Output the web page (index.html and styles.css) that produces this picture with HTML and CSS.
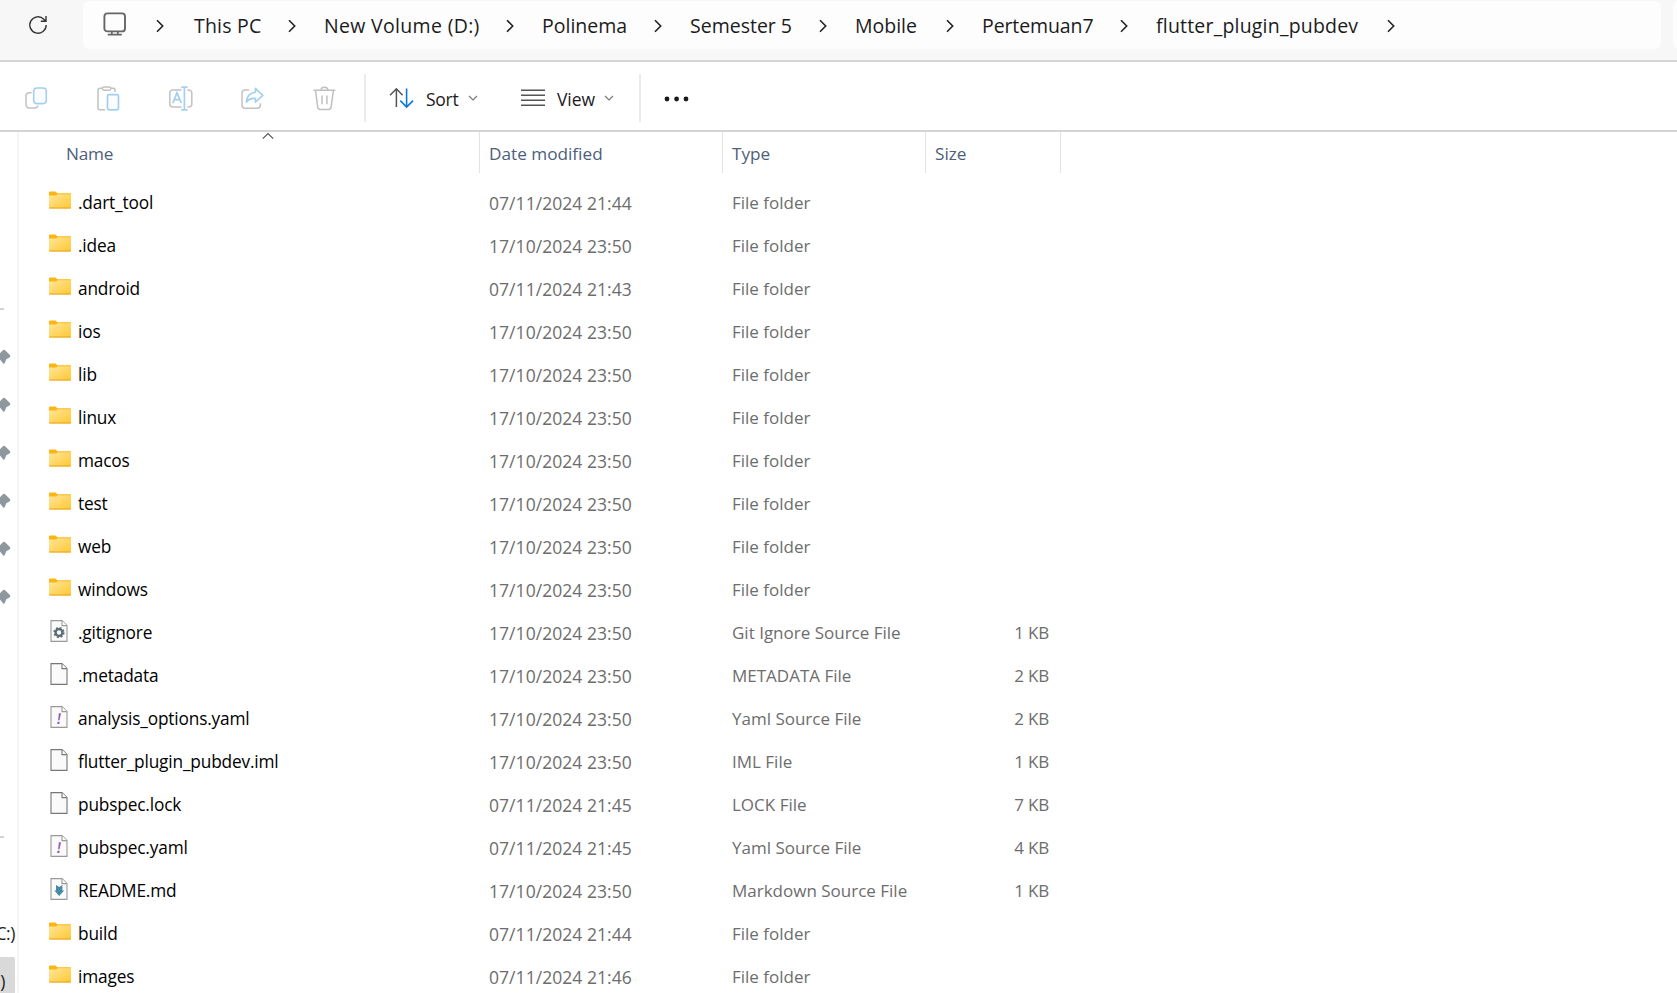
FILE: index.html
```html
<!DOCTYPE html>
<html lang="en">
<head>
<meta charset="utf-8">
<title>flutter_plugin_pubdev</title>
<link rel="stylesheet" href="styles.css">
</head>
<body>
<svg class="defs" width="0" height="0">
  <defs>
    <linearGradient id="fold" x1="0" y1="0" x2="1" y2="1"><stop offset="0" stop-color="#ffe69a"/><stop offset="1" stop-color="#ffc832"/></linearGradient>
    <symbol id="folder" viewBox="0 0 22 18"><path d="M0 1.5Q0 .5 1 .5H6.6L8.3 2.2H21.5Q22 2.2 22 3V6H0Z" fill="#fbb616"/><path d="M0 4.4H7.4L8.6 3.2H22V17.4H0Z" fill="url(#fold)"/><path d="M.3 17H21.7" stroke="#e9a21b" stroke-width="1"/></symbol>
    <symbol id="page" viewBox="0 0 18 22"><path d="M1 .6H12L17 5.6V21.4H1Z" fill="#fafafa" stroke="#777" stroke-width="1.1"/><path d="M12 .8V5.6H16.8" fill="#fff" stroke="#777" stroke-width="1.1"/></symbol>
    <symbol id="page-light" viewBox="0 0 18 22"><path d="M1 .6H12L17 5.6V21.4H1Z" fill="#fafafa" stroke="#999" stroke-width="1.1"/><path d="M12 .8V5.6H16.8" fill="#fff" stroke="#999" stroke-width="1.1"/></symbol>
    <symbol id="gear" viewBox="0 0 18 22"><use href="#page-light" width="18" height="22"/><circle cx="9" cy="12.5" r="3.4" fill="none" stroke="#596b74" stroke-width="2.3"/><circle cx="9" cy="12.5" r="4.9" fill="none" stroke="#596b74" stroke-width="1.4" stroke-dasharray="2 1.85"/></symbol>
    <symbol id="yaml" viewBox="0 0 18 22"><use href="#page-light" width="18" height="22"/><path d="M8.9 7.2H11L9.5 14.2H8.1ZM7.6 15.8H9.7L9.3 17.9H7.2Z" fill="#8d5fae"/></symbol>
    <symbol id="md" viewBox="0 0 18 22"><use href="#page-light" width="18" height="22"/><path d="M6 7L9.3 9L12.4 7V12.4H14.2L9.2 18L4.3 12.4H6Z" fill="#4689a9"/></symbol>
    <symbol id="pin" viewBox="0 0 12 16"><path d="M0 4.3L2.7 1.6Q4 .2 5.3 1.5L10 6Q11 7.2 9.8 8.2L6.3 10.2L4.6 14.5Q4 15.2 3.2 14.4L0 10.6Z" fill="#8f989f"/></symbol>
    <symbol id="right" viewBox="0 0 8 14"><path d="M1 1.2L6.7 7L1 12.8" fill="none" stroke="#222" stroke-width="1.6"/></symbol>
    <symbol id="down" viewBox="0 0 10 6"><path d="M1 1L5 5L9 1" fill="none" stroke="#777" stroke-width="1.1"/></symbol>
  </defs>
</svg>
<div class="window">
  <header class="address-bar">
    <svg class="refresh" width="20" height="20" viewBox="0 0 20 20"><path d="M18.2 10A8.2 8.2 0 1 1 15.8 4.2L17.6 6M18 1.1V6.2H12.8" fill="none" stroke="#333" stroke-width="1.4"/></svg>
    <nav class="crumbs">
      <svg class="pc" width="24" height="24" viewBox="0 0 24 24"><rect x="1.4" y="1.4" width="20.6" height="18" rx="3" fill="none" stroke="#666" stroke-width="1.9"/><path d="M8.8 19.5V22.5M14.8 19.5V22.5M4.8 22.7H18.8" fill="none" stroke="#666" stroke-width="1.7"/></svg>
      <svg class="sep"><use href="#right"/></svg><span class="c1">This PC</span>
      <svg class="sep"><use href="#right"/></svg><span class="c2">New Volume (D:)</span>
      <svg class="sep"><use href="#right"/></svg><span class="c3">Polinema</span>
      <svg class="sep"><use href="#right"/></svg><span class="c4">Semester 5</span>
      <svg class="sep"><use href="#right"/></svg><span class="c5">Mobile</span>
      <svg class="sep"><use href="#right"/></svg><span class="c6">Pertemuan7</span>
      <svg class="sep"><use href="#right"/></svg><span class="c7">flutter_plugin_pubdev</span>
      <svg class="sep"><use href="#right"/></svg>
    </nav>
    <div class="search"></div>
  </header>

  <div class="toolbar">
    <div class="tools">
      <svg width="26" height="26" viewBox="0 0 26 26"><path d="M7.6 6.7H5.4Q2 6.7 2 10V18.6Q2 22 5.4 22H10.4Q13.4 22 14 19.6" fill="none" stroke="#c2c2c2" stroke-width="1.5"/><rect x="9.7" y="2" width="12.6" height="15.6" rx="3" fill="#fafcfe" stroke="#a3cff1" stroke-width="1.6"/></svg>
      <svg width="26" height="26" viewBox="0 0 26 26"><path d="M7 2.3H4Q2 2.3 2 4.3V21.7Q2 23.7 4 23.7H9M14.5 2.3H17Q19 2.3 19 4.3V6" fill="none" stroke="#c2c2c2" stroke-width="1.5"/><rect x="6.4" y="1" width="8.4" height="3.2" rx="1.6" fill="#fff" stroke="#c2c2c2" stroke-width="1.5"/><rect x="11.5" y="8.6" width="11" height="15.2" rx="1.6" fill="#fafcfe" stroke="#a3cff1" stroke-width="1.7"/></svg>
      <svg width="26" height="26" viewBox="0 0 26 26"><path d="M13.6 3.9H5Q1.8 3.9 1.8 7V18Q1.8 21 5 21H13.6M19.4 3.9H20.4Q23.8 3.9 23.8 7V18Q23.8 21 20.4 21H19.4" fill="none" stroke="#c2c2c2" stroke-width="1.5"/><path d="M4.8 17L9 6.8L13.3 17M6.2 13.7H11.8M13.2 1.2H19.5M16.4 1.2V23.8M13.2 23.8H19.5" fill="none" stroke="#a3cff1" stroke-width="1.7"/></svg>
      <svg width="26" height="26" viewBox="0 0 26 26"><path d="M9.2 4H5Q2 4 2 7V19Q2 22.2 5 22.2H17.3Q20.4 22.2 20.4 19V17.2" fill="none" stroke="#c2c2c2" stroke-width="1.5"/><path d="M15.4 2.4L22.8 9.4L15.4 16.1V12.4Q9.3 11.8 6.3 16.2Q7.2 7.2 15.4 6.3Z" fill="none" stroke="#a3cff1" stroke-width="1.6" stroke-linejoin="round"/></svg>
      <svg width="26" height="26" viewBox="0 0 26 26"><path d="M1.5 4.2H23.4M9 4Q9.2 1.2 12.4 1.2Q15.7 1.2 15.9 4M3.5 4.4L5.7 21.2Q6 23.6 8.4 23.6H16.4Q18.8 23.6 19.1 21.2L21.4 4.4M10 9.6V18.2M14.9 9.6V18.2" fill="none" stroke="#c0c0c0" stroke-width="1.5"/></svg>
    </div>
    <button class="command sort">
      <svg width="25" height="22" viewBox="0 0 25 22"><path d="M7.4 20V1.8M1 8.3L7.4 1.8L13.6 8.3" fill="none" stroke="#555" stroke-width="1.5"/><path d="M17.6 1.5V20M11.3 13.6L17.6 20L24 13.6" fill="none" stroke="#0b7ad5" stroke-width="1.6"/></svg>
      <span>Sort</span><svg class="drop"><use href="#down"/></svg>
    </button>
    <button class="command view">
      <svg width="24" height="18" viewBox="0 0 24 18"><path d="M0 1.3H24M0 6.3H24M0 11.3H24M0 16.3H24" stroke="#555" stroke-width="1.4"/></svg>
      <span>View</span><svg class="drop"><use href="#down"/></svg>
    </button>
    <svg class="more" width="26" height="6" viewBox="0 0 26 6"><circle cx="3" cy="3" r="2.4"/><circle cx="12.6" cy="3" r="2.4"/><circle cx="22" cy="3" r="2.4"/></svg>
  </div>

  <div class="content">
    <aside class="sidebar">
      <div class="rule rule-top"></div>
      <div class="pins">
        <svg><use href="#pin"/></svg><svg><use href="#pin"/></svg><svg><use href="#pin"/></svg><svg><use href="#pin"/></svg><svg><use href="#pin"/></svg><svg><use href="#pin"/></svg>
      </div>
      <div class="rule rule-bottom"></div>
      <div class="drive">C:)</div>
      <div class="drive active">)</div>
    </aside>
    <main class="files">
      <div class="head">
        <div class="h-name">Name<svg class="ascending" width="12" height="8" viewBox="0 0 12 8"><path d="M.8 6.7L6 1.5L11.2 6.7" fill="none" stroke="#555" stroke-width="1.2"/></svg></div>
        <div>Date modified</div><div>Type</div><div>Size</div>
      </div>
      <div class="list" id="list"></div>
    </main>
  </div>
</div>
<script src="files.js"></script>
</body>
</html>
```
FILE: files.js
```js
const files = [
  ["folder", ".dart_tool", "07/11/2024 21:44", "File folder", ""],
  ["folder", ".idea", "17/10/2024 23:50", "File folder", ""],
  ["folder", "android", "07/11/2024 21:43", "File folder", ""],
  ["folder", "ios", "17/10/2024 23:50", "File folder", ""],
  ["folder", "lib", "17/10/2024 23:50", "File folder", ""],
  ["folder", "linux", "17/10/2024 23:50", "File folder", ""],
  ["folder", "macos", "17/10/2024 23:50", "File folder", ""],
  ["folder", "test", "17/10/2024 23:50", "File folder", ""],
  ["folder", "web", "17/10/2024 23:50", "File folder", ""],
  ["folder", "windows", "17/10/2024 23:50", "File folder", ""],
  ["gear", ".gitignore", "17/10/2024 23:50", "Git Ignore Source File", "1 KB"],
  ["page", ".metadata", "17/10/2024 23:50", "METADATA File", "2 KB"],
  ["yaml", "analysis_options.yaml", "17/10/2024 23:50", "Yaml Source File", "2 KB"],
  ["page", "flutter_plugin_pubdev.iml", "17/10/2024 23:50", "IML File", "1 KB"],
  ["page", "pubspec.lock", "07/11/2024 21:45", "LOCK File", "7 KB"],
  ["yaml", "pubspec.yaml", "07/11/2024 21:45", "Yaml Source File", "4 KB"],
  ["md", "README.md", "17/10/2024 23:50", "Markdown Source File", "1 KB"],
  ["folder", "build", "07/11/2024 21:44", "File folder", ""],
  ["folder", "images", "07/11/2024 21:46", "File folder", ""]
];

document.getElementById("list").innerHTML = files.map(([icon, name, date, type, size]) => `
  <div class="row">
    <svg class="icon ${icon === "folder" ? "is-folder" : "is-file"}"><use href="#${icon}"/></svg>
    <span class="name">${name}</span>
    <span class="date">${date}</span>
    <span class="type">${type}</span>
    <span class="size">${size}</span>
  </div>`).join("");
```
FILE: styles.css
```css
* { box-sizing: border-box; }
body { margin: 0; background: #fff; overflow: hidden; font-family: "Open Sans", "Noto Sans", sans-serif; }
.defs { display: block; height: 0; }
.window { height: 993px; display: flex; flex-direction: column; overflow: hidden; }
.window svg { display: block; flex: none; }

.address-bar { height: 62px; flex: none; display: flex; padding-top: 1px; background: #f7f7f7; border-bottom: 2px solid #d4d4d4; overflow: hidden; }
.refresh { margin: 14px 35px 0 28px; }
.crumbs {
  width: 1578px; height: 48px; flex: none; border-radius: 6px; background: #fdfdfd; padding-left: 20px;
  display: grid; align-items: center; color: #1b1b1b; font-size: 19.5px; line-height: 28px; white-space: nowrap;
  grid-template-columns: 53px 38px 94px 36px 182px 36px 112px 36px 129px 36px 91px 36px 138px 36px 231px 20px;
}
.pc { margin-bottom: 3px; }
.sep { width: 8px; height: 14px; margin-top: 2px; }
.search { flex: none; width: 20px; height: 48px; margin-left: 12px; border-radius: 6px; background: #fdfdfd; }
.crumbs span { letter-spacing: -0.1px; padding-top: 2px; }
.crumbs .c1 { letter-spacing: 0.2px; }
.crumbs .c2 { letter-spacing: 0.32px; }
.crumbs .c3, .crumbs .c4, .crumbs .c5 { letter-spacing: 0; }
.crumbs .c7 { letter-spacing: 0.2px; }

.toolbar { height: 70px; flex: none; display: flex; align-items: center; padding-top: 4px; border-bottom: 2px solid #d4d4d4; }
.tools { width: 366px; height: 48px; padding: 1px 0 0 24px; display: flex; align-items: center; gap: 46px; border-right: 2px solid #ebebeb; }
.command { border: 0; padding: 0; background: none; display: flex; align-items: center; font: 17.5px/24px "Open Sans", "Noto Sans", sans-serif; color: #1b1b1b; height: 48px; }
.command span { padding-top: 1px; margin-left: 12px; text-align: left; }
.sort { margin-left: 23px; width: 132px; }
.sort span { width: 42px; letter-spacing: -0.3px; }
.view { width: 120px; border-right: 2px solid #ebebeb; }
.view span { width: 47px; letter-spacing: -0.1px; }
.drop { width: 10px; height: 6px; }
.more { margin: 2px 0 0 23px; fill: #1b1b1b; }

.content { flex: 1; min-height: 0; display: flex; }
.sidebar { width: 19px; flex: none; border-right: 2px solid #f5f5f5; font-size: 17.5px; overflow: hidden; display: flex; flex-direction: column; }
.rule { width: 4px; height: 2px; background: #d4d4d4; flex: none; }
.rule-top { margin-top: 176px; }
.pins { display: flex; flex-direction: column; gap: 32px; margin-top: 39px; }
.pins svg { width: 12px; height: 16px; }
.rule-bottom { margin-top: 231px; }
.drive { width: 15px; height: 48px; flex: none; display: flex; justify-content: flex-end; align-items: center; line-height: 24px; white-space: nowrap; letter-spacing: -0.4px; color: #1b1b1b; }
.rule-bottom + .drive { margin-top: 71px; }
.drive.active { margin-top: 0; background: #d9d9d9; padding-right: 10px; border-top-right-radius: 2px; }

.files { flex: 1; min-width: 0; }
.head { height: 41px; display: grid; grid-template-columns: 461px 243px 203px 135px; font-size: 17.2px; letter-spacing: 0; color: #4c607a; }
.head > div { border-right: 1px solid #e3e3e3; padding: 9px 0 0 9px; line-height: 26px; }
.head .h-name { padding-left: 47px; letter-spacing: -0.2px; position: relative; }
.ascending { position: absolute; left: 243px; top: 0; }
.list { padding-top: 7px; }
.row { height: 43px; display: grid; grid-template-columns: 59px 411px 243px 203px 114px; align-items: center; font-size: 17px; line-height: 26px; white-space: nowrap; color: #6d6d6d; }
.row span { padding-top: 2px; }
.row .name { color: #000; font-size: 17.3px; letter-spacing: -0.17px; }
.row .date { font-size: 17.5px; letter-spacing: 0.05px; }
.is-folder { width: 22px; height: 18px; margin: 0 0 4px 30px; }
.is-file { width: 18px; height: 22px; margin: 0 0 1px 31px; }
.size { text-align: right; letter-spacing: -0.2px; }
```
